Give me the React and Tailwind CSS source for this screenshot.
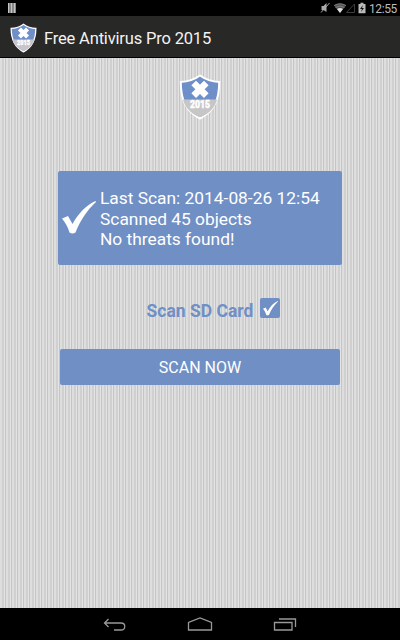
import React, { useState } from "react";

const Shield = ({ className }) => (
  <svg viewBox="0 0 42 46" className={className}>
    <path
      d="M21 1.500C15.500 5.500 9 7.700 1.800 8c0 16 4 29 19.200 36.500C36.200 37 40.200 24 40.200 8 33 7.700 26.500 5.500 21 1.500z"
      fill="#6f8fc8"
      stroke="#fff"
      strokeWidth="2"
    />
    <path d="M3.900 25.500h34.200C36 33 31 39.500 21 43.200 11 39.500 6 33 3.900 25.500z" fill="#c6c6c6" />
    <path d="M14.700 9l12.600 12.600M27.300 9L14.700 21.600" stroke="#fff" strokeWidth="6.600" />
    <text
      x="21"
      y="34"
      textAnchor="middle"
      textLength="20"
      lengthAdjust="spacingAndGlyphs"
      fill="#fff"
      stroke="#fff"
      strokeWidth=".4"
      className="font-['Roboto',sans-serif] text-[10px] font-black"
    >
      2015
    </text>
  </svg>
);

const Check = ({ className }) => (
  <svg viewBox="0 0 34 34" className={className} fill="currentColor">
    <path d="M0 17.500L6 15l4.500 8C16 13 24 4 33.500 0l.5 1C25 9 18 20 13.500 31.500q-3 2-6 0C6 26 3 21 0 17.500z" />
  </svg>
);

const StatusBar = () => (
  <div className="flex h-4 items-center bg-black pr-[3px] pl-2">
    <svg viewBox="0 0 8 10" className="h-[10px] w-2">
      <path d="M0 0h8v10H0z" fill="#888" />
      <path d="M.5 0v10M3.500 0v10M6.500 0v10" stroke="#c4c4c4" />
    </svg>
    <svg viewBox="0 0 48 12" className="ml-auto h-3 w-12">
      <g fill="#aaa">
        <path d="M1.500 4h2l3-3v9l-3-2h-2z" />
        <path d="M1 10.500L9.500 1" stroke="#aaa" />
        <path d="M14 3.500Q20-.5 26 3.500L20 11z" fill="#555" />
        <path d="M17 7Q20 5 23 7l-3 4z" fill="#ddd" />
        <path d="M14 3.500Q20 0 26 3.500M15.500 5.500Q20 2.500 24.500 5.500" fill="none" stroke="#888" strokeWidth=".8" />
      </g>
      <path d="M26.500 10.500h8V2z" fill="none" stroke="#3d3d3d" />
      <path d="M38.500 2h2V.7h3V2h2v9.300h-7z" fill="#bbb" />
      <path d="M43 3l-3 4h2l-1 3 3-4h-2z" fill="#111" />
    </svg>
    <span className="mt-px ml-px w-[28px] text-[12px] leading-4 tracking-[-0.4px] whitespace-nowrap text-[#bcbcbc]">
      12:55
    </span>
  </div>
);

const NavBar = () => (
  <div className="flex h-8 items-center justify-between bg-black px-[103px] text-[#999]">
    <svg viewBox="0 0 24 14" className="mt-px h-[14px] w-6" fill="none" stroke="currentColor" strokeWidth="1.300">
      <path d="M5.500 1L1.500 5l4 4M1.500 5H18c5 0 5 7 0 7h-7" />
    </svg>
    <svg viewBox="0 0 26 14" className="h-[14px] w-[26px]" fill="none" stroke="currentColor" strokeWidth="1.300">
      <path d="M1.500 13V5.500L13 1l11.500 4.500V13z" />
    </svg>
    <svg viewBox="0 0 24 14" className="h-[14px] w-6" fill="none" stroke="currentColor" strokeWidth="1.300">
      <path d="M1.500 5.500h17.500V13H1.500zM6 2h16.500v8" />
    </svg>
  </div>
);

export default function App() {
  const [scanSd, setScanSd] = useState(true);

  return (
    <div className="flex h-screen w-full flex-col overflow-hidden bg-black font-['Roboto',sans-serif]">
      <StatusBar />

      <header className="flex h-[42px] items-center gap-[7px] border-b border-black bg-[#282826] pl-[10px]">
        <Shield className="mt-[2px] h-[30px] w-[27px]" />
        <h1 className="mt-[5px] text-[16.500px] tracking-[-0.17px] text-[#f3f3f3]">Free Antivirus Pro 2015</h1>
      </header>

      <main className="flex flex-1 flex-col items-center bg-[repeating-linear-gradient(90deg,#dedede_0px,#dedede_2px,#d0d0d0_2px,#d0d0d0_4px,#e4e4e4_4px,#e4e4e4_5px,#c4c4c4_5px,#c4c4c4_6px)] pt-4">
        <Shield className="h-[46px] w-[42px]" />

        <section className="mt-[51px] flex h-[94px] w-[284px] items-center rounded-[2px] bg-[#6f8fc5] pl-1 text-white">
          <Check className="h-[34px] w-[34px] shrink-0" />
          <div className="mt-[2px] ml-1 text-[17.350px] leading-[20.500px] whitespace-nowrap">
            <p>Last Scan: 2014-08-26 12:54</p>
            <p>Scanned 45 objects</p>
            <p>No threats found!</p>
          </div>
        </section>

        <div className="mt-8 ml-[27px] flex h-[22px] items-center gap-[7px]">
          <span className="mt-[7px] text-[17.500px] font-bold text-[#6f8fc5]">Scan SD Card</span>
          <button
            onClick={() => setScanSd(!scanSd)}
            aria-label="Scan SD Card"
            className="flex h-5 w-5 items-center justify-center rounded-[2px] bg-[#6f8fc5] text-white"
          >
            {scanSd && <Check className="mt-px h-[15px] w-[15px]" />}
          </button>
        </div>

        <button className="mt-[30px] h-9 w-[280px] rounded-[2px] bg-[#6f8fc5] pt-[2px] text-[16px] text-white">
          SCAN NOW
        </button>
      </main>

      <NavBar />
    </div>
  );
}
